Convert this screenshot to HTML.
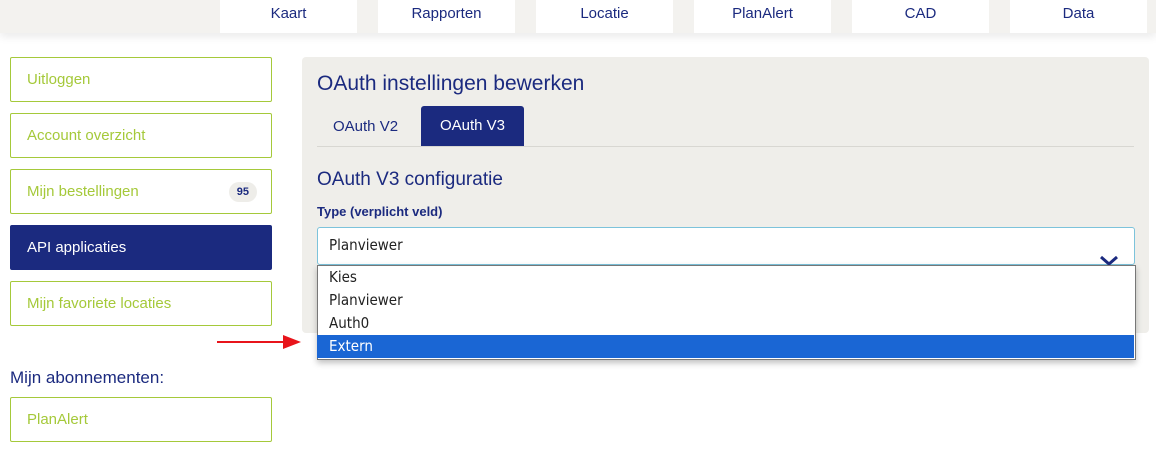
<!DOCTYPE html>
<html><head><style>
body{margin:0;width:1156px;height:455px;background:#fff;font-family:"Liberation Sans",sans-serif;position:relative;overflow:hidden}
.top{position:absolute;left:0;top:0;width:1156px;height:33px;background:#f3f2ef;box-shadow:0 4px 8px rgba(0,0,0,.08)}
.nav{position:absolute;top:0;height:33px;width:137px;background:#fff;color:#1b2a7f;font-size:15px;text-align:center;line-height:28px}
.box{position:absolute;left:10px;width:258px;height:43px;border:1.5px solid #a5c93a;border-radius:2px;color:#a5c93a;font-size:15px;line-height:43px;padding-left:16px;box-sizing:content-box;width:244px}
.dark{background:#1b2a7f;color:#fff;border-color:#1b2a7f}
.badge{position:absolute;right:14px;top:12px;background:#eeede9;color:#1b2a7f;font-size:11px;font-weight:bold;border-radius:10px;line-height:20px;padding:0 8px}
.panel{position:absolute;left:302px;top:57px;width:847px;height:276px;background:#efeeea;border-radius:4px}
.a{position:absolute;color:#1b2a7f}
.opt{position:absolute;left:317px;width:816px;height:23px;font-family:"DejaVu Sans Condensed","Liberation Sans",sans-serif;font-size:15px;line-height:23px;padding-left:12px;box-sizing:border-box;color:#222}
</style></head><body>
<div class="top"></div>
<div class="nav" style="left:220px">Kaart</div>
<div class="nav" style="left:378px">Rapporten</div>
<div class="nav" style="left:536px">Locatie</div>
<div class="nav" style="left:694px">PlanAlert</div>
<div class="nav" style="left:852px">CAD</div>
<div class="nav" style="left:1010px">Data</div>

<div class="box" style="top:57px">Uitloggen</div>
<div class="box" style="top:113px">Account overzicht</div>
<div class="box" style="top:169px">Mijn bestellingen<span class="badge">95</span></div>
<div class="box dark" style="top:225px">API applicaties</div>
<div class="box" style="top:281px">Mijn favoriete locaties</div>
<div class="a" style="left:10px;top:368px;font-size:17px">Mijn abonnementen:</div>
<div class="box" style="top:397px">PlanAlert</div>

<div class="panel"></div>
<div class="a" style="left:317px;top:72px;font-size:21px">OAuth instellingen bewerken</div>
<div class="a" style="left:333px;top:118px;font-size:15px">OAuth V2</div>
<div style="position:absolute;left:421px;top:106px;width:103px;height:40px;background:#1b2a7f;border-radius:3px 3px 0 0;color:#fff;font-size:15px;text-align:center;line-height:40px">OAuth V3</div>
<div style="position:absolute;left:317px;top:146px;width:817px;height:1px;background:#d8d7d2"></div>
<div class="a" style="left:317px;top:169px;font-size:19px">OAuth V3 configuratie</div>
<div class="a" style="left:317px;top:204px;font-size:13px;font-weight:bold">Type (verplicht veld)</div>
<div style="position:absolute;left:317px;top:227px;width:816px;height:36px;background:#fff;border:1px solid #7cc3db;border-radius:3px"></div>
<div class="opt" style="top:234px;color:#222">Planviewer</div>
<svg style="position:absolute;left:1099px;top:255px" width="20" height="12"><path d="M2 2 L10 9 L18 2" stroke="#1b2a7f" stroke-width="3" fill="none"/></svg>
<div style="position:absolute;left:317px;top:265px;width:817px;height:93px;background:#fff;border:1px solid #777;box-shadow:0 3px 6px rgba(0,0,0,.25)"></div>
<div class="opt" style="top:266px">Kies</div>
<div class="opt" style="top:289px">Planviewer</div>
<div class="opt" style="top:312px">Auth0</div>
<div class="opt" style="top:335px;background:#1a66d4;color:#fff;width:817px">Extern</div>
<svg style="position:absolute;left:215px;top:332px" width="90" height="20"><path d="M2 10 H70" stroke="#e8141b" stroke-width="2"/><path d="M68 3 L86 10 L68 17 Z" fill="#e8141b"/></svg>
</body></html>
